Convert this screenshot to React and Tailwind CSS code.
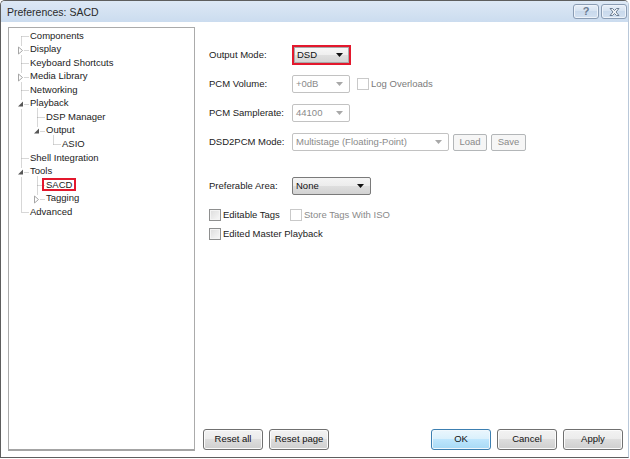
import React from 'react';

const treeItems = [
  { label: 'Components', level: 0 },
  { label: 'Display', level: 0, exp: 'closed' },
  { label: 'Keyboard Shortcuts', level: 0 },
  { label: 'Media Library', level: 0, exp: 'closed' },
  { label: 'Networking', level: 0 },
  { label: 'Playback', level: 0, exp: 'open' },
  { label: 'DSP Manager', level: 1 },
  { label: 'Output', level: 1, exp: 'open' },
  { label: 'ASIO', level: 2 },
  { label: 'Shell Integration', level: 0 },
  { label: 'Tools', level: 0, exp: 'open' },
  { label: 'SACD', level: 1, selected: true },
  { label: 'Tagging', level: 1, exp: 'closed' },
  { label: 'Advanced', level: 0 },
];

const ROW_H = 13.55;
const cy = (i) => Math.round(8 + i * ROW_H) + 0.5;
const lineX = (lvl) => 12.5 + lvl * 16;

// dotted connector lines + expander glyphs
const TreeLines = () => {
  const lines = [];
  const glyphs = [];
  treeItems.forEach((it, i) => {
    const x = lineX(it.level);
    const y = cy(i);
    lines.push(<line key={`h${i}`} x1={x} y1={y} x2={x + 7} y2={y} />);
    for (let j = i - 1; j >= 0; j--) {
      const lv = treeItems[j].level;
      if (lv === it.level) {
        lines.push(<line key={`v${i}`} x1={x} y1={cy(j)} x2={x} y2={y} />);
        break;
      }
      if (lv < it.level) {
        lines.push(<line key={`v${i}`} x1={x} y1={cy(j) + 4} x2={x} y2={y} />);
        break;
      }
    }
    if (it.exp) {
      glyphs.push(<rect key={`r${i}`} x={x - 4.5} y={y - 4.5} width={7} height={9} fill="#fff" />);
      if (it.exp === 'closed') {
        glyphs.push(
          <polygon
            key={`g${i}`}
            points={`${x - 3},${y - 3.5} ${x + 1},${y} ${x - 3},${y + 3.5}`}
            fill="#fff"
            stroke="#a6a6a6"
            strokeWidth="1"
          />
        );
      } else {
        glyphs.push(
          <polygon
            key={`g${i}`}
            points={`${x + 1.5},${y - 3} ${x + 1.5},${y + 2} ${x - 3.5},${y + 2}`}
            fill="#575757"
          />
        );
      }
    }
  });
  return (
    <svg className="absolute inset-0 pointer-events-none" width="185" height="420">
      <g stroke="#afafaf" strokeWidth="1" strokeDasharray="1 1" fill="none">
        {lines}
      </g>
      {glyphs}
    </svg>
  );
};

const Tree = () => (
  <div className="w-[187px] shrink-0 mt-[5px] mb-[6px] ml-[7px] border border-[#ababab] border-b-2 border-b-[#a4a4a4] bg-white">
    <div className="relative h-full">
      <TreeLines />
      <div className="relative flex flex-col pt-[1px]">
        {treeItems.map((it) => (
          <div
            key={it.label}
            className="h-[13.55px] flex items-center whitespace-nowrap"
            style={{ paddingLeft: 21 + it.level * 16 }}
          >
            {it.selected ? (
              <span className="inline-block -ml-[4px] px-[2px] border-2 border-[#e3182d] leading-[9px]">
                {it.label}
              </span>
            ) : (
              <span>{it.label}</span>
            )}
          </div>
        ))}
      </div>
    </div>
  </div>
);

const ArrowDown = ({ disabled }) =>
  disabled ? (
    <svg width="7" height="4" viewBox="0 0 7 4" className="shrink-0">
      <polygon points="0,0 7,0 3.5,4" fill="#a8a8a8" />
    </svg>
  ) : (
    <svg width="7" height="4" viewBox="0 0 7 4" className="shrink-0">
      <polygon points="0,0 7,0 3.5,4" fill="#111" />
    </svg>
  );

const Combo = ({ value, width, disabled, className = '' }) => (
  <div
    className={
      disabled
        ? `h-[18px] flex items-center justify-between pl-[3px] pr-[6px] border border-[#c2c2c2] rounded-[2px] bg-white text-[#8a8a8a] ${className}`
        : `h-[18px] flex items-center justify-between pl-[3px] pr-[6px] border border-[#7a7a7a] rounded-[2px] bg-[linear-gradient(#f4f4f4,#ececec_50%,#dedede_50%,#d2d2d2)] text-[#111] ${className}`
    }
    style={{ width }}
  >
    <span className="whitespace-nowrap">{value}</span>
    <ArrowDown disabled={disabled} />
  </div>
);

const CheckBox = ({ disabled }) => (
  <div
    className={
      disabled
        ? 'w-[12px] h-[12px] shrink-0 border border-[#c9c9c9] bg-white'
        : 'w-[12px] h-[12px] shrink-0 border border-[#8e8f8f] bg-[linear-gradient(135deg,#dcdcdc,#f8f8f8)] shadow-[inset_0_0_0_1px_#f4f4f4]'
    }
  />
);

const Label = ({ children }) => <div className="w-[83px] shrink-0 whitespace-nowrap">{children}</div>;

const WinButton = ({ children, primary }) => (
  <button
    className={
      primary
        ? 'w-[60px] h-[21px] rounded-[3px] border border-[#3c7fb1] bg-[linear-gradient(#eaf6fd,#d9f0fc_50%,#bee6fd_50%,#a7d9f5)] shadow-[inset_0_0_0_1px_#f0f8fd] text-[#111]'
        : 'w-[60px] h-[21px] rounded-[3px] border border-[#707070] bg-[linear-gradient(#f2f2f2,#ebebeb_50%,#dddddd_50%,#cfcfcf)] shadow-[inset_0_0_0_1px_#fbfbfb] text-[#111]'
    }
  >
    {children}
  </button>
);

const SmallButton = ({ children, width }) => (
  <div
    className="h-[17px] flex items-center justify-center rounded-[2px] border border-[#b3b6b8] bg-[#f6f6f6] text-[#8a8a8a]"
    style={{ width }}
  >
    {children}
  </div>
);

const TitleButton = ({ children }) => (
  <div className="w-[26px] h-[15px] flex items-center justify-center rounded-[3px] border border-[#8a9cb3] bg-[linear-gradient(#e8eff8,#d4e1f0_50%,#c9d9ec_50%,#d3e1f1)] shadow-[inset_0_0_0_1px_#eef3fa]">
    {children}
  </div>
);

export default function App() {
  return (
    <div className="w-[630px] h-[459px] bg-white font-['Liberation_Sans',Arial,sans-serif] text-[9.5px] text-[#1b1b1b]">
      <div className="w-[629px] h-[458px] flex flex-col border border-[#5e5e5e] border-r-[#b9c8d9] rounded-t-[5px] overflow-hidden bg-white">
        {/* Title bar */}
        <div className="h-[21px] shrink-0 flex items-start bg-[linear-gradient(#dde8f5,#cbdcef)] pl-[6px] pr-[1px]">
          <span className="mt-[4px] text-[10.5px] text-[#2a2a2a]">Preferences: SACD</span>
          <div className="ml-auto mt-[3px] flex gap-[2px]">
            <TitleButton>
              <span className="text-[11px] font-bold text-[#6a7b90] leading-none">?</span>
            </TitleButton>
            <TitleButton>
              <svg width="11" height="8" viewBox="0 0 11 8">
                <path
                  d="M1 0.5 L3.5 0.5 L5.5 2.5 L7.5 0.5 L10 0.5 L7 4 L10 7.5 L7.5 7.5 L5.5 5.5 L3.5 7.5 L1 7.5 L4 4 Z"
                  fill="#f4f6f9"
                  stroke="#6d7e93"
                  strokeWidth="1"
                  strokeLinejoin="round"
                />
              </svg>
            </TitleButton>
          </div>
        </div>

        {/* Body */}
        <div className="flex-1 flex min-h-0">
          <Tree />

          <div className="flex-1 flex flex-col">
            <div className="pl-[14px] pt-[23px] flex flex-col">
              <div className="h-[20px] flex items-center">
                <Label>Output Mode:</Label>
                <div className="w-[59px] h-[20px] border-2 border-[#e3182d]">
                  <div className="h-full flex items-center justify-between pl-[2px] pr-[5px] border border-[#a9a9a9] bg-[linear-gradient(#f7f7f7,#efefef_50%,#e0e0e0_50%,#d5d5d5)] text-[#111]">
                    <span>DSD</span>
                    <ArrowDown />
                  </div>
                </div>
              </div>

              <div className="mt-[10px] h-[18px] flex items-center">
                <Label>PCM Volume:</Label>
                <Combo value="+0dB" width={58} disabled />
                <div className="ml-[7px] flex items-center gap-[2px] text-[#7b7b7b]">
                  <CheckBox disabled />
                  <span>Log Overloads</span>
                </div>
              </div>

              <div className="mt-[11px] h-[18px] flex items-center">
                <Label>PCM Samplerate:</Label>
                <Combo value="44100" width={58} disabled />
              </div>

              <div className="mt-[11px] h-[18px] flex items-center">
                <Label>DSD2PCM Mode:</Label>
                <Combo value="Multistage (Floating-Point)" width={157} disabled />
                <div className="ml-[4px] flex gap-[4px]">
                  <SmallButton width={34}>Load</SmallButton>
                  <SmallButton width={35}>Save</SmallButton>
                </div>
              </div>

              <div className="mt-[26px] h-[18px] flex items-center">
                <Label>Preferable Area:</Label>
                <Combo value="None" width={79} />
              </div>

              <div className="mt-[13px] h-[14px] flex items-center">
                <div className="w-[81px] flex items-center gap-[2px]">
                  <CheckBox />
                  <span>Editable Tags</span>
                </div>
                <div className="flex items-center gap-[2px] text-[#8a8a8a]">
                  <CheckBox disabled />
                  <span>Store Tags With ISO</span>
                </div>
              </div>

              <div className="mt-[5px] h-[14px] flex items-center gap-[2px]">
                <CheckBox />
                <span>Edited Master Playback</span>
              </div>
            </div>

            <div className="mt-auto mb-[7px] pl-[8px] pr-[5px] flex gap-[6px]">
              <WinButton>Reset all</WinButton>
              <WinButton>Reset page</WinButton>
              <div className="ml-auto flex gap-[6px]">
                <WinButton primary>OK</WinButton>
                <WinButton>Cancel</WinButton>
                <WinButton>Apply</WinButton>
              </div>
            </div>
          </div>
        </div>
      </div>
    </div>
  );
}
